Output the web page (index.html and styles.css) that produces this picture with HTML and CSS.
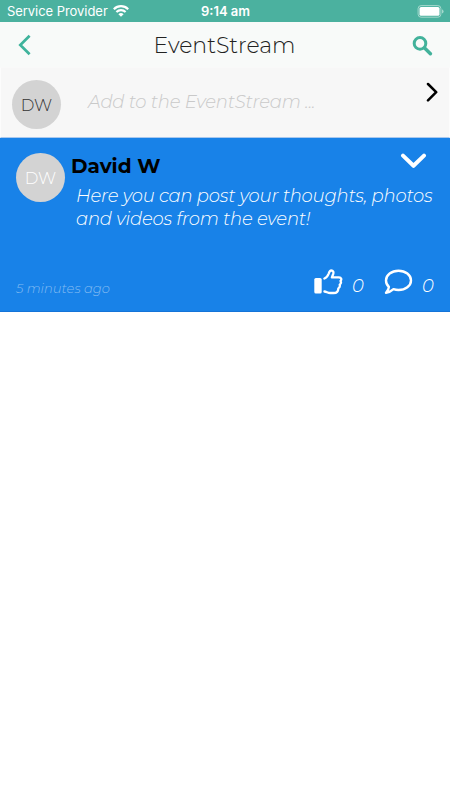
FILE: index.html
```html
<!DOCTYPE html>
<html lang="en">
<head>
  <meta charset="UTF-8">
  <meta name="viewport" content="width=device-width, initial-scale=1.0">
  <title>EventStream</title>
  <link rel="stylesheet" href="styles.css">
</head>
<body>
  <div class="status-bar">
    <div class="carrier">
      <span>Service Provider</span>
      <svg width="16" height="12" viewBox="0 0 16 12" fill="none" stroke="#fff" stroke-width="2.2">
        <path d="M.8 4.2C5 .2 11 .2 15.2 4.2M3.4 7C6 4.6 10 4.6 12.6 7"/>
        <path d="M8 11.8L5.4 9.2Q8 7 10.6 9.2Z" fill="#fff" stroke="none"/>
      </svg>
    </div>
    <span class="time">9:14 am</span>
    <svg class="battery" width="27" height="13" viewBox="0 0 27 13">
      <rect x="1.1" y=".6" width="22.8" height="11.6" rx="3" fill="none" stroke="#a5d8cd"/>
      <rect x="2.5" y="2" width="20" height="8.8" rx="1.6" fill="#fff"/>
      <path d="M25 4.3Q26.6 5 26.6 6.4T25 8.5Z" fill="#a5d8cd"/>
    </svg>
  </div>

  <header class="header">
    <svg width="14" height="22" viewBox="0 0 14 22" fill="none" stroke="#3fb39c" stroke-width="2.7">
      <path d="M12.6 1.7L3.3 11L12.6 20.3"/>
    </svg>
    <h1>EventStream</h1>
    <svg width="21" height="21" viewBox="0 0 21 21" fill="none" stroke="#42b29b">
      <circle cx="8" cy="8.4" r="5.8" stroke-width="3"/>
      <path d="M12.6 13L18.4 18.8" stroke-width="3.4" stroke-linecap="round"/>
    </svg>
  </header>

  <section class="composer">
    <div class="avatar dark">DW</div>
    <span class="placeholder">Add to the EventStream ...</span>
    <svg class="next" width="13" height="20" viewBox="0 0 13 20" fill="none" stroke="#000" stroke-width="2.5" stroke-linecap="round" stroke-linejoin="round">
      <path d="M3 2L11.2 10.2L3 18.4"/>
    </svg>
  </section>

  <article class="post">
    <div class="post-top">
      <div class="avatar">DW</div>
      <div class="post-body">
        <div class="post-title">
          <h2>David W</h2>
          <svg width="27" height="16" viewBox="0 0 27 16" fill="none" stroke="#fff" stroke-width="4" stroke-linecap="round" stroke-linejoin="round">
            <path d="M3 2.6L13.5 12.8L24 2.6"/>
          </svg>
        </div>
        <p>Here you can post your thoughts, photos<br>and videos from the event!</p>
      </div>
    </div>
    <div class="post-bottom">
      <span class="ago">5 minutes ago</span>
      <div class="actions">
        <svg width="29" height="26" viewBox="0 0 29 26" fill="none" stroke="#fff" stroke-width="2.3" stroke-linecap="round" stroke-linejoin="round">
          <rect x=".3" y="9" width="7.4" height="15.5" rx="1.6" fill="#fff" stroke="none"/>
          <path d="M10.4 9.5C12.8 8.6 13.7 7.2 14.7 4.6C15.3 2.7 15.9 1.5 17.3 1.5C19.2 1.5 19.8 3.3 19.2 5L17.9 8.4H25C27.3 8.4 28 10.4 26.5 12C27.3 13.3 26.8 14.8 25.7 15.6C26.2 17.2 25.5 18.6 24.3 19.4C24.3 22.4 22.6 24 19.6 24H16.3C13.6 24 12.8 22.7 10.4 22.5"/>
        </svg>
        <span class="count">0</span>
        <svg class="comment" width="29" height="26" viewBox="0 0 29 26" fill="none" stroke="#fff" stroke-width="2.4" stroke-linejoin="round">
          <path d="M14.5 1.7C21.4 1.7 27 6 27 11.4S21.4 21 14.5 21C12.7 21 11 20.7 9.5 20.2C7.3 22.2 5.2 23.5 2 23.8C3.9 21.8 4.7 20.3 4.9 17.8C3 16 2 13.8 2 11.4C2 6 7.6 1.7 14.5 1.7Z"/>
        </svg>
        <span class="count">0</span>
      </div>
    </div>
  </article>
</body>
</html>
```

FILE: styles.css
```css
* {
  box-sizing: border-box;
}
body {
  margin: 0;
  background: #fff;
  font-family: Montserrat, Inter, "Open Sans", sans-serif;
  font-weight: 300;
}
svg {
  display: block;
  flex-shrink: 0;
}
h1, h2, p {
  margin: 0;
}
span, h2, p {
  white-space: nowrap;
}
.status-bar {
  display: grid;
  grid-template-columns: 1fr auto 1fr;
  align-items: center;
  height: 22px;
  padding: 0 6px 0 7px;
  background: #4bb19f;
  color: #fff;
  font-family: Inter, sans-serif;
  font-size: 13px;
  font-weight: 400;
}
.carrier {
  display: flex;
  align-items: center;
  gap: 5px;
  letter-spacing: -0.05px;
}
.time {
  font-weight: 600;
}
.battery {
  justify-self: end;
}
.header {
  display: flex;
  align-items: center;
  height: 45px;
  padding: 1px 17px 0;
  background: #f8faf9;
}
.header h1 {
  flex: 1;
  padding-left: 6px;
  color: #222;
  font-size: 22px;
  font-weight: 300;
  text-align: center;
}
.composer {
  display: flex;
  height: 71px;
  padding: 12px 11px 0;
  border: 1px solid #fcfcfc;
  border-top-color: #f9f9f9;
  border-bottom-color: #a9c8ee;
  background: #f7f7f7;
}
.avatar {
  display: flex;
  align-items: center;
  justify-content: center;
  flex-shrink: 0;
  width: 49px;
  height: 49px;
  border-radius: 50%;
  background: #d3d3d3;
  color: #fff;
  font-size: 16.5px;
}
.avatar.dark {
  color: #333;
}
.placeholder {
  margin: 11px 0 0 27px;
  color: #c9c9c9;
  font-size: 18px;
  font-style: italic;
  line-height: 22px;
  letter-spacing: -0.2px;
}
.next {
  margin: 2px 0 0 auto;
}
.post {
  height: 174px;
  padding: 16px 16px 0;
  border-bottom: 1px solid #1474d8;
  background: #1882e8;
  color: #fff;
}
.post-top {
  display: flex;
  gap: 6px;
  height: 110px;
}
.post-top .avatar {
  margin-top: -1px;
}
.post-body {
  flex: 1;
  min-width: 0;
}
.post-title {
  display: flex;
  justify-content: space-between;
  height: 32px;
  margin-top: -1px;
  padding-right: 7px;
}
.post-title h2 {
  color: #000;
  font-size: 20px;
  font-weight: 700;
  line-height: 26px;
}
.post-body p {
  padding-left: 5px;
  font-size: 18px;
  font-style: italic;
  line-height: 23px;
  letter-spacing: -0.2px;
}
.post-bottom {
  display: flex;
  justify-content: space-between;
}
.ago {
  margin-top: 16px;
  color: #83bbf2;
  font-size: 13.1px;
  font-style: italic;
  line-height: 16px;
}
.actions {
  display: flex;
  margin-top: 5px;
}
.count {
  width: 12px;
  margin: 6px 0 0 9px;
  font-size: 18px;
  font-style: italic;
  line-height: 22px;
}
.comment {
  margin-left: 20px;
}
```
